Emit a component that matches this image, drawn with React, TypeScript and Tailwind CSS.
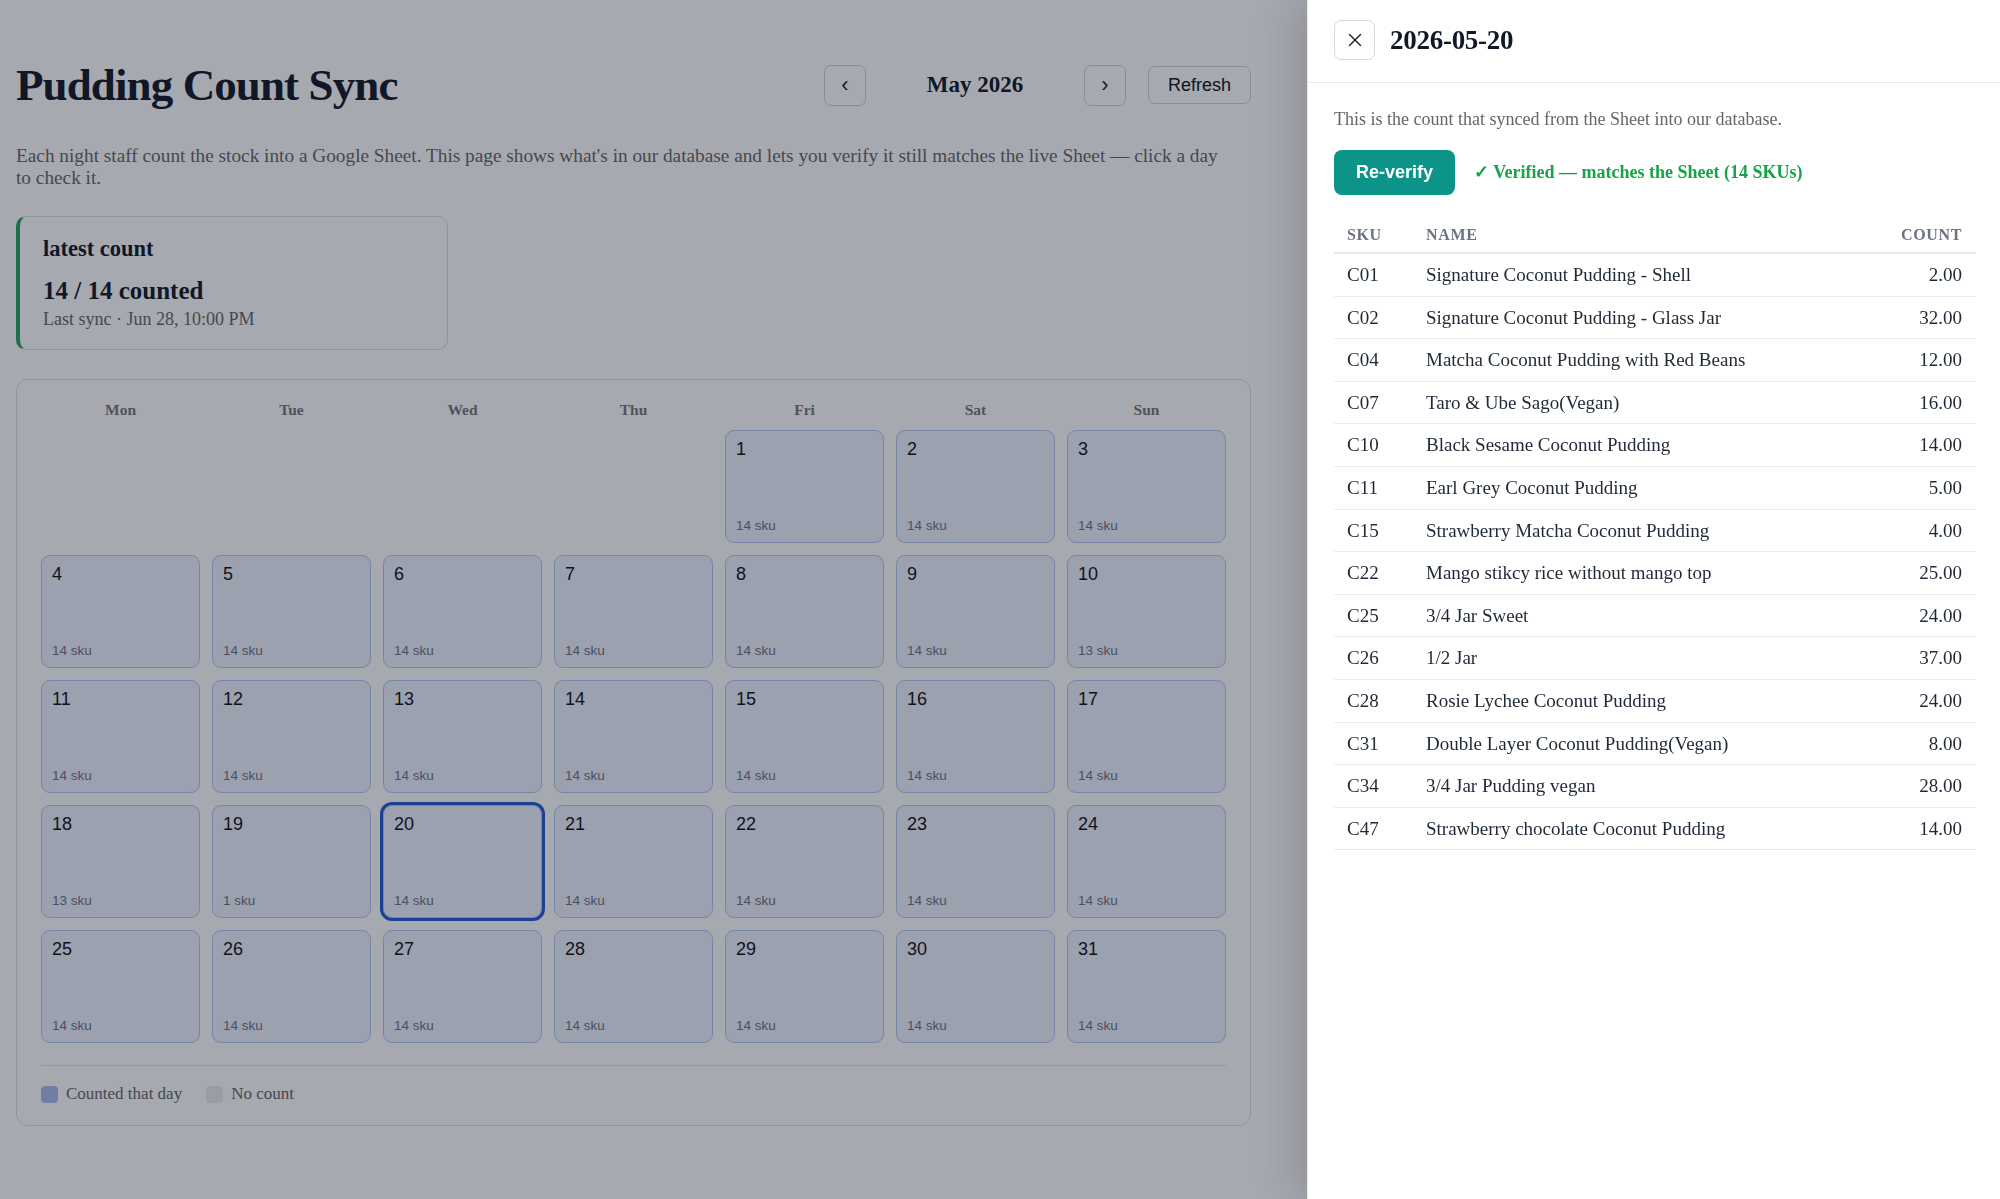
import React from 'react';
import { X } from 'lucide-react';

type Row = { sku: string; name: string; count: string };

const rows: Row[] = [
  { sku: 'C01', name: 'Signature Coconut Pudding - Shell', count: '2.00' },
  { sku: 'C02', name: 'Signature Coconut Pudding - Glass Jar', count: '32.00' },
  { sku: 'C04', name: 'Matcha Coconut Pudding with Red Beans', count: '12.00' },
  { sku: 'C07', name: 'Taro & Ube Sago(Vegan)', count: '16.00' },
  { sku: 'C10', name: 'Black Sesame Coconut Pudding', count: '14.00' },
  { sku: 'C11', name: 'Earl Grey Coconut Pudding', count: '5.00' },
  { sku: 'C15', name: 'Strawberry Matcha Coconut Pudding', count: '4.00' },
  { sku: 'C22', name: 'Mango stikcy rice without mango top', count: '25.00' },
  { sku: 'C25', name: '3/4 Jar Sweet', count: '24.00' },
  { sku: 'C26', name: '1/2 Jar', count: '37.00' },
  { sku: 'C28', name: 'Rosie Lychee Coconut Pudding', count: '24.00' },
  { sku: 'C31', name: 'Double Layer Coconut Pudding(Vegan)', count: '8.00' },
  { sku: 'C34', name: '3/4 Jar Pudding vegan', count: '28.00' },
  { sku: 'C47', name: 'Strawberry chocolate Coconut Pudding', count: '14.00' },
];

const weekdays = ['Mon', 'Tue', 'Wed', 'Thu', 'Fri', 'Sat', 'Sun'];

// May 2026 starts on a Friday
const skuByDay: Record<number, number> = { 10: 13, 18: 13, 19: 1 };
const selectedDay = 20;

function DayCell({ day }: { day: number }) {
  const selected = day === selectedDay;
  return (
    <div
      className={`h-[113px] flex flex-col justify-between rounded-[9px] border border-[#b3c6f3] bg-[#eef2ff] px-[10px] pt-[8px] pb-[8px] font-['Liberation_Sans',Arial,sans-serif] ${
        selected ? 'ring-[3px] ring-[#2459d6]' : ''
      }`}
    >
      <span className="text-[18px] leading-[21px] text-[#111]">{day}</span>
      <span className="text-[13.5px] leading-[16px] text-[#6b7280]">{skuByDay[day] ?? 14} sku</span>
    </div>
  );
}

export default function App() {
  const days = Array.from({ length: 31 }, (_, i) => i + 1);

  return (
    <div className="relative min-h-screen bg-white font-['Liberation_Serif','Times_New_Roman',serif] text-[#111827]">
      {/* page */}
      <div className="pl-[16px] pt-[59px] pb-[40px]">
        <div className="w-[1235px]">
          <div className="flex items-center justify-between">
            <h1 className="text-[45px] leading-[52px] font-bold tracking-[-0.02em]">Pudding Count Sync</h1>
            <div className="flex items-center gap-[22px]">
              <button className="h-[41px] w-[42px] rounded-[7px] border border-[#cfd2d8] bg-white text-[22px] leading-none font-['Liberation_Sans',Arial,sans-serif] text-[#222]">
                ‹
              </button>
              <div className="w-[174px] text-center text-[23px] font-bold">May 2026</div>
              <button className="h-[41px] w-[42px] rounded-[7px] border border-[#cfd2d8] bg-white text-[22px] leading-none font-['Liberation_Sans',Arial,sans-serif] text-[#222]">
                ›
              </button>
              <button className="h-[38px] w-[103px] rounded-[7px] border border-[#cfd2d8] bg-white text-[18px] font-['Liberation_Sans',Arial,sans-serif] text-[#111]">
                Refresh
              </button>
            </div>
          </div>

          <p className="mt-[34px] max-w-[1213px] text-[19.3px] leading-[21.7px] text-[#666]">
            Each night staff count the stock into a Google Sheet. This page shows what's in our database and lets you
            verify it still matches the live Sheet — click a day to check it.
          </p>

          {/* latest count card */}
          <div className="mt-[28px] w-[432px] rounded-[10px] border border-[#dedede] border-l-4 border-l-[#22a55a] pl-[23px] pt-[19px] pb-[19px]">
            <div className="text-[22.5px] leading-[26px] font-bold">latest count</div>
            <div className="mt-[14px] text-[25px] leading-[29px] font-bold">14 / 14 counted</div>
            <div className="mt-[4px] text-[18px] leading-[21px] text-[#666]">Last sync · Jun 28, 10:00 PM</div>
          </div>

          {/* calendar */}
          <div className="mt-[29px] rounded-[12px] border border-[#e0e0e0] px-[24px] pt-[21px] pb-[21px]">
            <div className="grid grid-cols-7 gap-[12px]">
              {weekdays.map(d => (
                <div key={d} className="text-center text-[15.5px] leading-[17px] font-bold text-[#777]">
                  {d}
                </div>
              ))}
              {Array.from({ length: 4 }).map((_, i) => (
                <div key={`e${i}`} />
              ))}
              {days.map(d => (
                <DayCell key={d} day={d} />
              ))}
            </div>
            <div className="mt-[22px] border-t border-[#e3e3e3] pt-[18px] flex items-center gap-[24px] text-[17px] leading-[20px] text-[#666]">
              <div className="flex items-center gap-[8px]">
                <span className="h-[17px] w-[17px] rounded-[4px] bg-[#aabcf0]" />
                Counted that day
              </div>
              <div className="flex items-center gap-[8px]">
                <span className="h-[17px] w-[17px] rounded-[4px] bg-[#eaebef]" />
                No count
              </div>
            </div>
          </div>
        </div>
      </div>

      {/* dim overlay */}
      <div className="fixed inset-0 bg-[#0f172a]/[0.37]" />

      {/* side panel */}
      <aside className="fixed top-0 right-0 h-full w-[693px] bg-white border-l border-[#e5e7eb] shadow-[-14px_0_40px_rgba(0,0,0,0.14)]">
        <div className="flex items-center gap-[15px] border-b border-[#e8e8e8] pl-[26px] pt-[20px] pb-[22px]">
          <button className="flex h-[40px] w-[41px] items-center justify-center rounded-[7px] border border-[#d6d6d6] bg-white text-[#222]">
            <X size={22} strokeWidth={1.5} />
          </button>
          <h2 className="text-[27px] leading-[32px] font-bold tracking-[-0.01em]">2026-05-20</h2>
        </div>

        <div className="pl-[26px] pr-[24px] pt-[26px]">
          <p className="text-[18px] leading-[21px] text-[#666]">
            This is the count that synced from the Sheet into our database.
          </p>
          <div className="mt-[20px] flex items-center gap-[19px]">
            <button className="h-[45px] w-[121px] rounded-[8px] bg-[#0d9488] text-[18px] font-bold text-white font-['Liberation_Sans',Arial,sans-serif]">
              Re-verify
            </button>
            <span className="text-[18px] font-bold text-[#16a34a]">✓ Verified — matches the Sheet (14 SKUs)</span>
          </div>

          <table className="mt-[22px] w-full border-collapse">
            <thead>
              <tr className="border-b-2 border-[#e5e7eb]">
                <th className="w-[79px] pl-[13px] pt-[8px] pb-[8px] text-left text-[16px] leading-[19px] font-bold tracking-[0.04em] text-[#6b7280]">
                  SKU
                </th>
                <th className="pl-[13px] pt-[8px] pb-[8px] text-left text-[16px] leading-[19px] font-bold tracking-[0.04em] text-[#6b7280]">
                  NAME
                </th>
                <th className="pr-[14px] pt-[8px] pb-[8px] text-right text-[16px] leading-[19px] font-bold tracking-[0.04em] text-[#6b7280]">
                  COUNT
                </th>
              </tr>
            </thead>
            <tbody>
              {rows.map(r => (
                <tr key={r.sku} className="border-b border-[#ececec]">
                  <td className="pl-[13px] py-[10px] text-[19px] leading-[21.6px] text-[#1f2937]">{r.sku}</td>
                  <td className="pl-[13px] py-[10px] text-[19px] leading-[21.6px] text-[#1f2937]">{r.name}</td>
                  <td className="pr-[14px] py-[10px] text-right text-[19px] leading-[21.6px] text-[#1f2937]">{r.count}</td>
                </tr>
              ))}
            </tbody>
          </table>
        </div>
      </aside>
    </div>
  );
}
